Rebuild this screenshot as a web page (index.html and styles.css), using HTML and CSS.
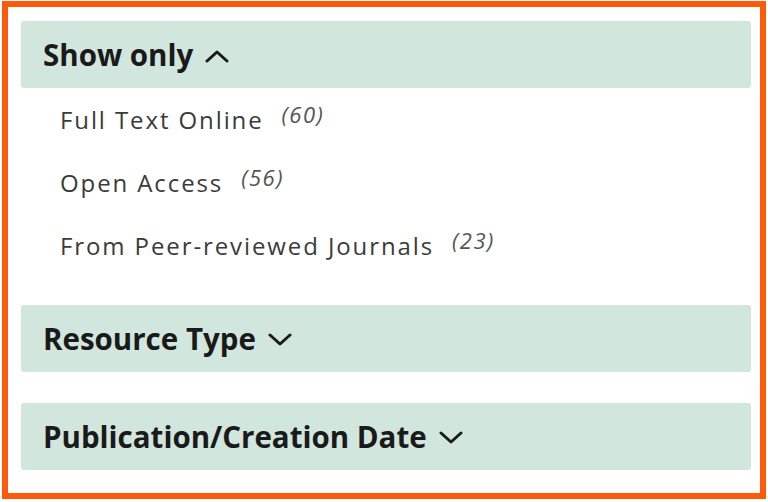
FILE: index.html
```html
<!DOCTYPE html>
<html lang="en">
<head>
<meta charset="utf-8">
<title>Facets</title>
<link rel="stylesheet" href="styles.css">
</head>
<body>
<div class="panel">
  <section class="facet facet-open">
    <button class="facet-head" type="button">
      <span class="facet-title">Show only</span>
      <svg class="chevron" width="24" height="14" viewBox="0 0 24 14" aria-hidden="true"><path d="M2 12 L12 3 L22 12" fill="none" stroke="#1a1a1a" stroke-width="3" stroke-linecap="round" stroke-linejoin="round"/></svg>
    </button>
    <ul class="facet-list">
      <li class="facet-item"><span class="item-label">Full Text Online</span><span class="item-count">(60)</span></li>
      <li class="facet-item"><span class="item-label">Open Access</span><span class="item-count">(56)</span></li>
      <li class="facet-item"><span class="item-label">From Peer-reviewed Journals</span><span class="item-count">(23)</span></li>
    </ul>
  </section>
  <section class="facet">
    <button class="facet-head" type="button">
      <span class="facet-title">Resource Type</span>
      <svg class="chevron" width="24" height="14" viewBox="0 0 24 14" aria-hidden="true"><path d="M2 2 L12 11 L22 2" fill="none" stroke="#1a1a1a" stroke-width="3" stroke-linecap="round" stroke-linejoin="round"/></svg>
    </button>
  </section>
  <section class="facet">
    <button class="facet-head" type="button">
      <span class="facet-title">Publication/Creation Date</span>
      <svg class="chevron" width="24" height="14" viewBox="0 0 24 14" aria-hidden="true"><path d="M2 2 L12 11 L22 2" fill="none" stroke="#1a1a1a" stroke-width="3" stroke-linecap="round" stroke-linejoin="round"/></svg>
    </button>
  </section>
</div>
</body>
</html>
```

FILE: styles.css
```css
html, body {
  margin: 0;
  padding: 0;
  background: #ffffff;
}

body {
  font-family: "Open Sans", Lato, "Liberation Sans", sans-serif;
  width: 768px;
  height: 502px;
  overflow: hidden;
}

.panel {
  box-sizing: border-box;
  margin: 1px 2px 0 2px;
  width: 764px;
  height: 498px;
  border: 6px solid #fe5a0c;
  padding: 14px 9px 0 13px;
  display: flex;
  flex-direction: column;
}

.facet + .facet {
  margin-top: 31px;
}

.facet-open + .facet {
  margin-top: 28px;
}

.facet-head {
  box-sizing: border-box;
  width: 100%;
  height: 67px;
  margin: 0;
  border: 0;
  border-radius: 3px;
  background: #d1e6dd;
  padding: 0 0 0 22px;
  display: flex;
  align-items: center;
  gap: 12px;
  font-family: inherit;
  text-align: left;
  cursor: pointer;
}

.facet-title {
  font-size: 29.5px;
  font-weight: 700;
  color: #1a1a1a;
}

.chevron {
  flex: none;
  margin-top: 3px;
}

.facet-list {
  list-style: none;
  margin: 0;
  padding: 0 0 0 39px;
}

.facet-item {
  height: 63px;
  display: flex;
  align-items: center;
  gap: 18px;
}

.item-label {
  font-size: 24px;
  letter-spacing: 1.9px;
  color: #3b3b3b;
}

.item-count {
  font-size: 22px;
  font-style: italic;
  letter-spacing: 1.5px;
  color: #555555;
  position: relative;
  top: -6px;
}
```
